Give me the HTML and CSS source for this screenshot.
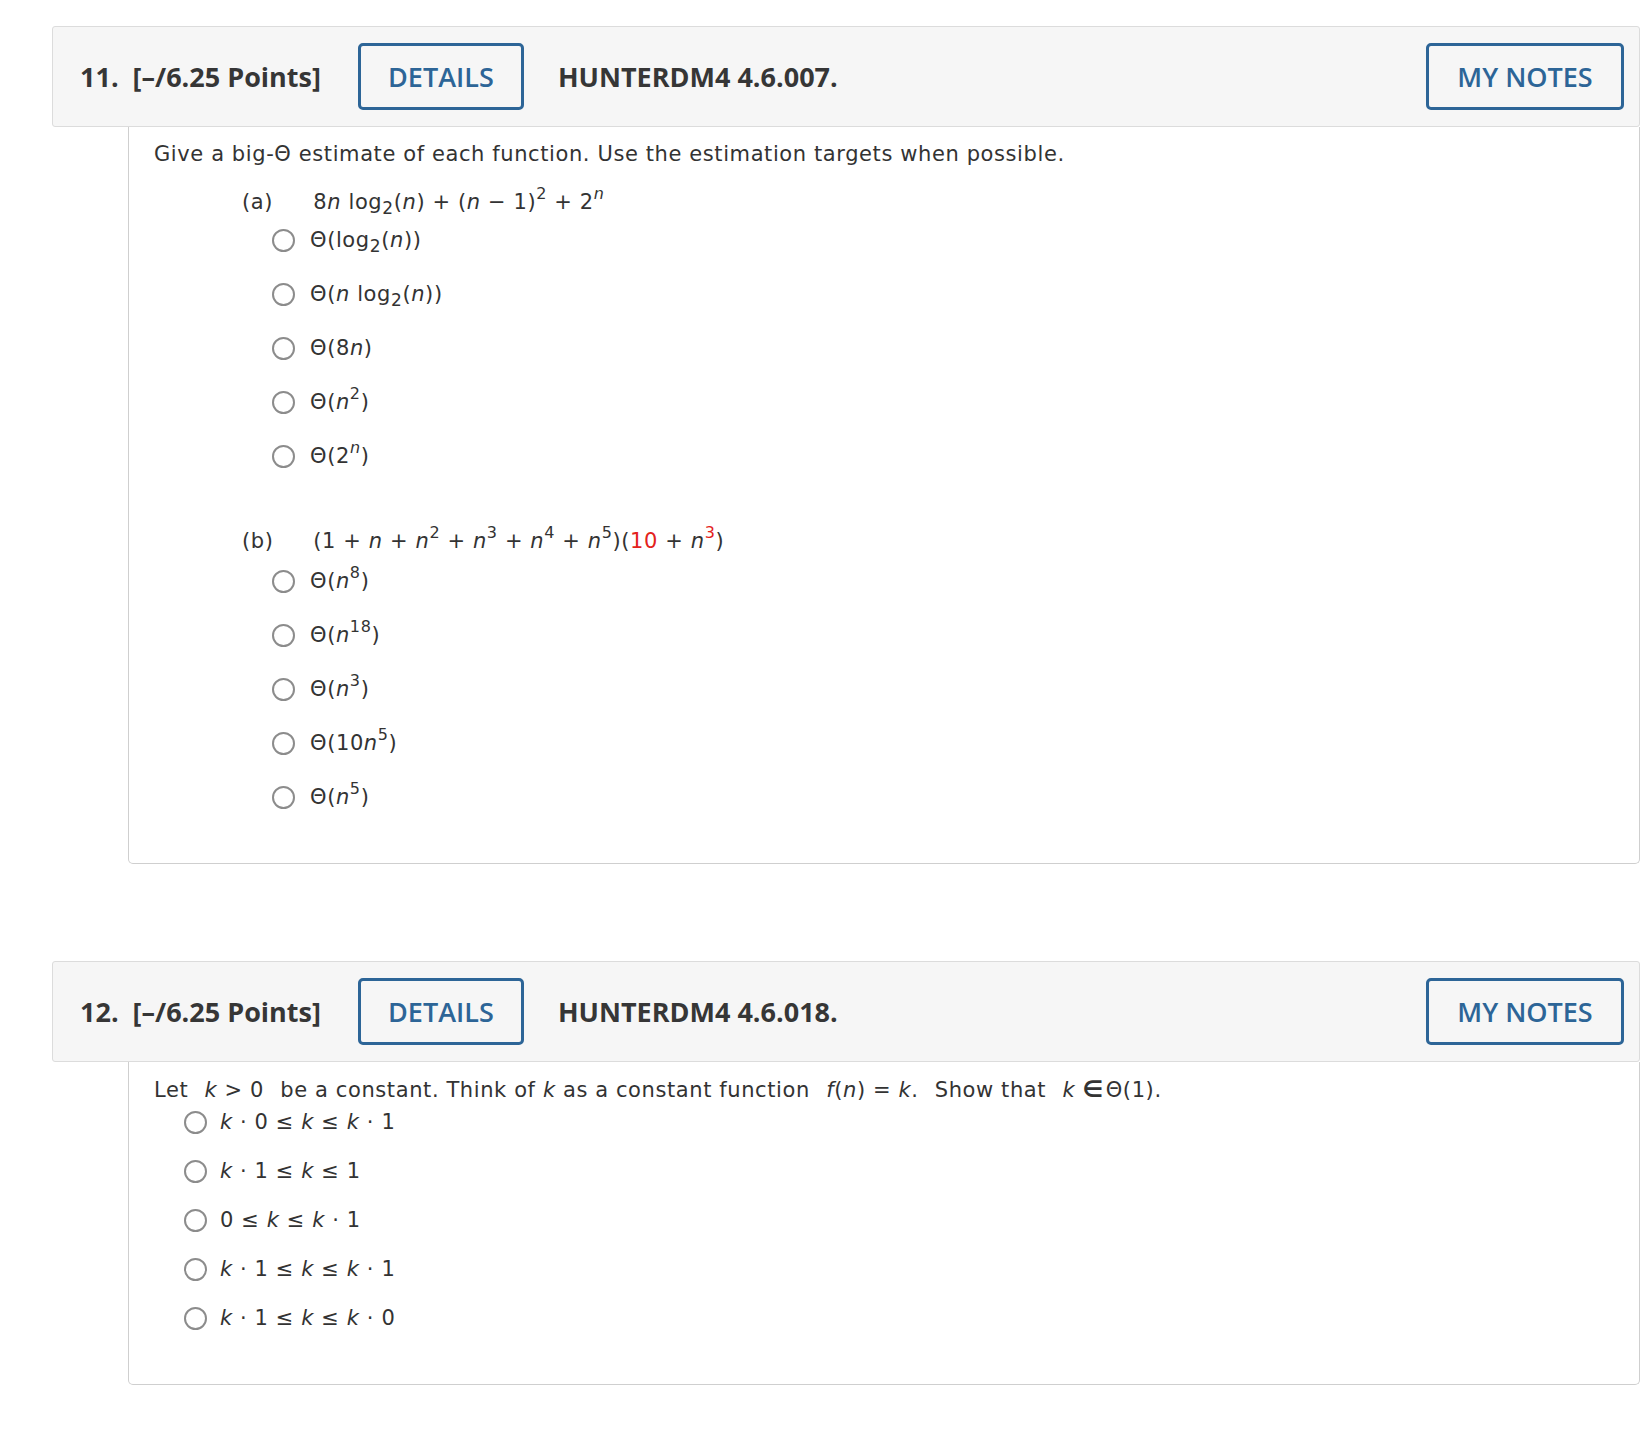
FILE: index.html
```html
<!DOCTYPE html>
<html lang="en">
<head>
  <meta charset="UTF-8" />
  <meta name="viewport" content="width=device-width, initial-scale=1" />
  <title>Assignment - Questions 11 and 12</title>
  <link rel="stylesheet" href="styles.css">
</head>
<body>

  <div class="page">

    <section class="question">
      <div class="q-head">
        <span class="q-num">11.</span>
        <span class="q-points">[&ndash;/6.25 Points]</span>
        <button class="q-btn">DETAILS</button>
        <span class="q-ref">HUNTERDM4 4.6.007.</span>
        <button class="q-btn notes">MY NOTES</button>
      </div>

      <div class="q-body">
        <p class="prompt">Give a big-&Theta; estimate of each function. Use the estimation targets when possible.</p>

        <div class="part">
          <div class="part-expr">
            <span class="part-label">(a)</span>
            <span>8<i>n</i> log<sub>2</sub>(<i>n</i>) + (<i>n</i> &minus; 1)<sup>2</sup> + 2<sup><i>n</i></sup></span>
          </div>
          <ul class="choices">
            <li><label><input type="radio" name="q11a"><span>&Theta;(log<sub>2</sub>(<i>n</i>))</span></label></li>
            <li><label><input type="radio" name="q11a"><span>&Theta;(<i>n</i> log<sub>2</sub>(<i>n</i>))</span></label></li>
            <li><label><input type="radio" name="q11a"><span>&Theta;(8<i>n</i>)</span></label></li>
            <li><label><input type="radio" name="q11a"><span>&Theta;(<i>n</i><sup>2</sup>)</span></label></li>
            <li><label><input type="radio" name="q11a"><span>&Theta;(2<sup><i>n</i></sup>)</span></label></li>
          </ul>
        </div>

        <div class="part part-b">
          <div class="part-expr">
            <span class="part-label">(b)</span>
            <span>(1 + <i>n</i> + <i>n</i><sup>2</sup> + <i>n</i><sup>3</sup> + <i>n</i><sup>4</sup> + <i>n</i><sup>5</sup>)(<span class="wrong">10</span> + <i>n</i><sup class="wrong">3</sup>)</span>
          </div>
          <ul class="choices">
            <li><label><input type="radio" name="q11b"><span>&Theta;(<i>n</i><sup>8</sup>)</span></label></li>
            <li><label><input type="radio" name="q11b"><span>&Theta;(<i>n</i><sup>18</sup>)</span></label></li>
            <li><label><input type="radio" name="q11b"><span>&Theta;(<i>n</i><sup>3</sup>)</span></label></li>
            <li><label><input type="radio" name="q11b"><span>&Theta;(10<i>n</i><sup>5</sup>)</span></label></li>
            <li><label><input type="radio" name="q11b"><span>&Theta;(<i>n</i><sup>5</sup>)</span></label></li>
          </ul>
        </div>
      </div>
    </section>

    <section class="question">
      <div class="q-head">
        <span class="q-num">12.</span>
        <span class="q-points">[&ndash;/6.25 Points]</span>
        <button class="q-btn">DETAILS</button>
        <span class="q-ref">HUNTERDM4 4.6.018.</span>
        <button class="q-btn notes">MY NOTES</button>
      </div>

      <div class="q-body">
        <p class="prompt">Let <span class="m"><i>k</i> &gt; 0</span> be a constant. Think of <i>k</i> as a constant function <span class="m"><i>f</i>(<i>n</i>) = <i>k</i>.</span> Show that <span class="m"><i>k</i> <b class="elem">&isin;</b>&Theta;(1).</span></p>

        <ul class="choices short">
          <li><label><input type="radio" name="q12"><span><i>k</i> &middot; 0 &le; <i>k</i> &le; <i>k</i> &middot; 1</span></label></li>
          <li><label><input type="radio" name="q12"><span><i>k</i> &middot; 1 &le; <i>k</i> &le; 1</span></label></li>
          <li><label><input type="radio" name="q12"><span>0 &le; <i>k</i> &le; <i>k</i> &middot; 1</span></label></li>
          <li><label><input type="radio" name="q12"><span><i>k</i> &middot; 1 &le; <i>k</i> &le; <i>k</i> &middot; 1</span></label></li>
          <li><label><input type="radio" name="q12"><span><i>k</i> &middot; 1 &le; <i>k</i> &le; <i>k</i> &middot; 0</span></label></li>
        </ul>
      </div>
    </section>

  </div>

</body>
</html>
```

FILE: styles.css
```css
body {
  margin: 0;
  padding: 0;
  background: #fff;
  color: #333;
  font-family: 'DejaVu Sans', Verdana, sans-serif;
}

.page {
  padding: 26px 2px 60px 52px;
}

.question + .question {
  margin-top: 97px;
}

/* question header bar */

.q-head {
  display: flex;
  align-items: center;
  height: 99px;
  padding: 0 15px 0 27px;
  background: #f6f6f6;
  border: 1px solid #dcdcdc;
  border-radius: 3px;
  font-family: 'Open Sans', 'Liberation Sans', sans-serif;
  color: #363636;
}

.q-num {
  font-size: 27px;
  font-weight: 700;
  margin-right: 14px;
}

.q-points {
  font-size: 27px;
  font-weight: 700;
  margin-right: 37px;
}

.q-ref {
  font-size: 27px;
  font-weight: 700;
  margin-left: 34px;
}

.q-btn {
  height: 67px;
  width: 166px;
  padding: 0;
  background: transparent;
  border: 3px solid #2d6597;
  border-radius: 5px;
  color: #2d6597;
  font-family: 'Open Sans', 'Liberation Sans', sans-serif;
  font-size: 27px;
  font-weight: 600;
  cursor: pointer;
}

.q-btn.notes {
  width: 198px;
  margin-left: auto;
}

/* question body */

.q-body {
  margin-left: 76px;
  padding: 12px 25px 51px 25px;
  border: 1px solid #cfcfcf;
  border-top: none;
  border-radius: 0 0 5px 5px;
  font-size: 21px;
  letter-spacing: 0.6px;
  line-height: 30px;
}

.prompt {
  margin: 0;
}

.prompt .m {
  margin: 0 9px;
}

.elem {
  font-size: 23px;
  margin-right: 2px;
}

i {
  font-style: italic;
}

sup,
sub {
  line-height: 0;
  position: relative;
  vertical-align: baseline;
}

sup {
  font-size: 16px;
  top: -10px;
}

sub {
  font-size: 17px;
  top: 5px;
}

.wrong {
  color: #e3221b;
}

.part {
  margin: 18px 0 0 88px;
}

.part-b {
  margin-top: 55px;
}

.part-label {
  display: inline-block;
  width: 64px;
}

.part-expr {
  margin-bottom: 8px;
}

.part-b .part-expr {
  margin-bottom: 10px;
}

.choices {
  list-style: none;
  margin: 0 0 0 30px;
  padding: 0;
  display: flex;
  flex-direction: column;
  gap: 24px;
}

.choices label {
  display: flex;
  align-items: center;
  gap: 15px;
  cursor: pointer;
}

.choices input {
  appearance: none;
  -webkit-appearance: none;
  margin: 0;
  width: 23px;
  height: 23px;
  border: 2px solid #8c8c8c;
  border-radius: 50%;
  background: #fff;
  flex-shrink: 0;
}

.choices.short {
  margin: 2px 0 0 30px;
  gap: 19px;
}

.choices.short label {
  gap: 13px;
}
```
